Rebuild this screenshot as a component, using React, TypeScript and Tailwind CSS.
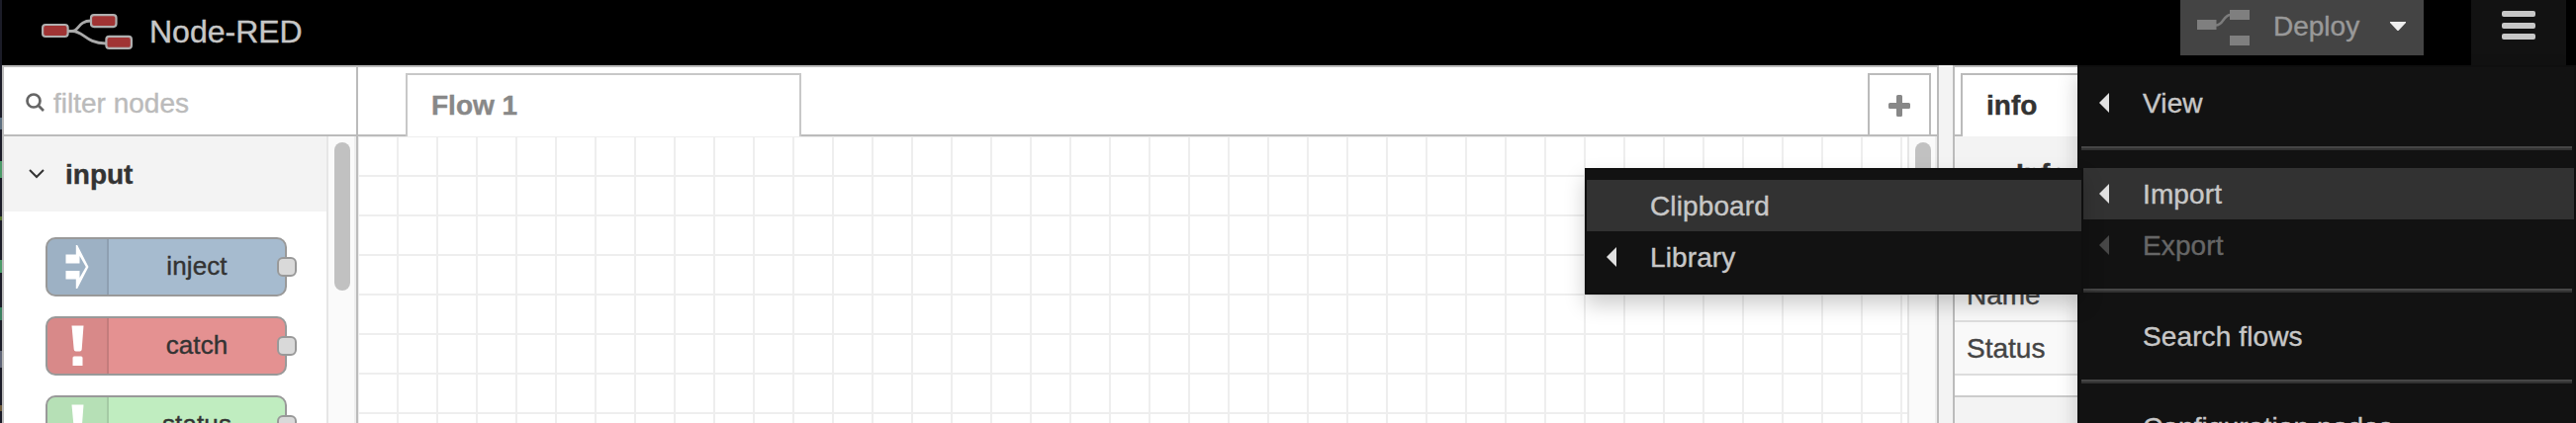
import React from "react";

const strip = [
  { top: 119, h: 12, c: "#5d6f80" },
  { top: 163, h: 17, c: "#4a9a68" },
  { top: 219, h: 4, c: "#55702f" },
  { top: 263, h: 13, c: "#4a9a68" },
  { top: 311, h: 13, c: "#3b8060" },
  { top: 355, h: 17, c: "#5f6577" },
  { top: 410, h: 6, c: "#6d5a3c" },
];

function Logo() {
  return (
    <svg className="block" width="92" height="36" viewBox="0 0 92 36" fill="none">
      <g stroke="#aaaaaa" strokeWidth="2.8">
        <path d="M26 17.5h5c7 0 6-10.500 19-10.500" />
        <path d="M31 17.500c12 0 13 12 34 12.500" />
      </g>
      <g fill="#a03434" stroke="#b0b0b0" strokeWidth="2.200">
        <rect x="1.100" y="11" width="25.500" height="12" rx="3" />
        <rect x="50" y="1.100" width="25.500" height="12" rx="3" />
        <rect x="65.400" y="22.900" width="25.500" height="12" rx="3" />
      </g>
    </svg>
  );
}

function DeployIcon() {
  return (
    <svg className="block" width="53" height="36" viewBox="0 0 53 36">
      <path d="M19 15.500c8 0 7-10.500 15-10.500" stroke="#7c7c7c" strokeWidth="2.500" fill="none" />
      <path d="M0 10h19.500v10H0zM33 0h20v10H33zM33 26h20v10H33z" fill="#7f7f7f" />
    </svg>
  );
}

function InjectIcon() {
  return (
    <svg className="block" width="24" height="46" viewBox="0 0 24 46">
      <path
        fillRule="evenodd"
        d="M.5 10.500h10.300V1h1.400L23.500 23 12.200 45h-1.400v-9.500H.500V27h14v7L20.800 23 14.500 12v7.500H.500z"
        fill="#fff"
      />
    </svg>
  );
}

function AlertIcon() {
  return (
    <svg className="block" width="24" height="46" viewBox="0 0 24 46">
      <path d="M6.500 2.500h12l-1.800 24q-.2 2-2 2h-4q-1.800 0-2-2zM9 33.500h7q1.500 0 1.500 1.500v8h-10v-8q0-1.500 1.500-1.500z" fill="#fff" />
    </svg>
  );
}

function PaletteNode({ label, color, icon }: { label: string; color: string; icon: React.ReactNode }) {
  return (
    <div className={`relative flex h-[60px] w-[244px] shrink-0 rounded-[10px] border-2 border-[#999] ${color}`}>
      <div className="flex w-[62px] shrink-0 items-center justify-center rounded-l-lg border-r-2 border-black/10 bg-black/5">
        {icon}
      </div>
      <div className="flex-1 text-center text-[26px] leading-[54px] tracking-[0.1px]">{label}</div>
      <div className="absolute -right-3 top-[18px] size-5 rounded-[6px] border-2 border-[#999] bg-[#d9d9d9]" />
    </div>
  );
}

function MenuItem({ label, arrow, active, disabled }: { label: string; arrow?: boolean; active?: boolean; disabled?: boolean }) {
  return (
    <div
      className={`flex h-[52px] shrink-0 items-center pl-5 ${active ? "bg-[#323232]" : ""} ${disabled ? "text-[#666]" : "text-[#c7c7c7]"}`}
    >
      <svg className="mr-[34px] block" width="10" height="20" viewBox="0 0 10 20">
        {arrow && <path d="M10 0v20L0 10z" fill={disabled ? "#474747" : "#e0e0e0"} />}
      </svg>
      <span className="pt-0.5 leading-[50px] tracking-[0.12px]">{label}</span>
    </div>
  );
}

const Divider = () => <div className="mx-0.5 my-[18px] h-1 shrink-0 border-b-2 border-[#323232] bg-[#464646]" />;

function Scrollbar({ thumb }: { thumb: string }) {
  return (
    <div className="flex w-[30px] shrink-0 justify-center border-x-2 border-l-[#e6e6e6] border-r-[#eeeeee] bg-[#fafafa] pt-1.5">
      <div className={`w-4 rounded-full bg-[#c1c1c1] ${thumb}`} />
    </div>
  );
}

export default function App() {
  return (
    <div className="relative flex h-[428px] w-[2604px] overflow-hidden bg-white font-['Liberation_Sans',sans-serif] text-[28px] text-[#333] [-webkit-text-stroke:0.4px_currentColor]">
      <div className="relative w-0.5 shrink-0 bg-[#1b1c28]">
        {strip.map((s) => (
          <i key={s.top} className="absolute left-0 w-0.5" style={{ top: s.top, height: s.h, background: s.c }} />
        ))}
      </div>

      <div className="flex min-w-0 flex-1 flex-col">
        <header className="flex h-[66px] shrink-0 items-start bg-black">
          <div className="pl-10 pt-3.5">
            <Logo />
          </div>
          <div className="ml-[17px] text-[32px] leading-[65px] text-[#c7c7c7]">Node-RED</div>
          <div className="ml-auto flex h-14 w-[246px] items-center bg-[#444] pl-[17px]">
            <DeployIcon />
            <span className="-mt-0.5 ml-6 leading-[52px] text-[#999]">Deploy</span>
            <svg className="ml-[31px] -mt-1 block" width="16" height="9" viewBox="0 0 16 9">
              <path d="M0 0h16v1L8.500 9h-1L0 1z" fill="#eee" />
            </svg>
          </div>
          <div className="ml-12 mr-2.5 flex h-[66px] w-24 flex-col items-center gap-[5.500px] bg-[#121212] pt-[11px]">
            <div className="h-1.5 w-[34px] rounded-[2px] bg-[#c7c7c7]" />
            <div className="h-1.5 w-[34px] rounded-[2px] bg-[#c7c7c7]" />
            <div className="h-1.5 w-[34px] rounded-[2px] bg-[#c7c7c7]" />
          </div>
        </header>

        <main className="flex h-[362px] bg-[#f3f3f3]">
          <aside className="flex w-[360px] shrink-0 flex-col border-x-2 border-t-2 border-[#bbb] bg-white">
            <div className="flex h-[70px] shrink-0 items-center border-b-2 border-[#bbb] pl-[22px] pt-[3px] text-[#bbb]">
              <svg className="mr-2 block" width="20" height="20" viewBox="0 0 20 20" fill="none" stroke="#666" strokeWidth="2.700">
                <circle cx="8" cy="8" r="6.500" />
                <path d="M12.800 12.800l5.200 5.200" />
              </svg>
              <span className="pt-0.5 leading-[60px]">filter nodes</span>
            </div>
            <div className="flex min-h-0 flex-1">
              <div className="flex min-w-0 flex-1 flex-col">
                <div className="flex h-[76px] shrink-0 items-center bg-[#f3f3f3] pl-[25px]">
                  <svg className="mr-[21px] block" width="16" height="10" viewBox="0 0 16 10" fill="none" stroke="#333" strokeWidth="2">
                    <path d="M1 1l7 7 7-7" />
                  </svg>
                  <b className="pt-0.5">input</b>
                </div>
                <div className="flex flex-col gap-5 overflow-hidden pl-[42px] pt-[26px]">
                  <PaletteNode label="inject" color="bg-[#a6bbcf]" icon={<InjectIcon />} />
                  <PaletteNode label="catch" color="bg-[#e49191]" icon={<AlertIcon />} />
                  <PaletteNode label="status" color="bg-[#c0edc0]" icon={<AlertIcon />} />
                </div>
              </div>
              <Scrollbar thumb="h-[150px] ml-0.5" />
            </div>
          </aside>

          <section className="flex w-[1598px] shrink-0 flex-col border-r-2 border-t-2 border-[#bbb] bg-white">
            <div className="flex h-[70px] shrink-0 items-stretch">
              <div className="w-12 border-b-2 border-[#bbb]" />
              <div className="mt-1.5 w-[400px] border-x-2 border-t-2 border-[#c8c8c8] pl-[24px] font-bold leading-[61px] text-[#888]">
                Flow 1
              </div>
              <div className="flex-1 border-b-2 border-[#bbb]" />
              <div className="mt-1.5 flex w-16 justify-center border-2 border-[#bbb] pt-5">
                <svg className="block" width="22" height="22" viewBox="0 0 22 22">
                  <path d="M8 1.500Q8 0 9.500 0h3Q14 0 14 1.500V8h6.500Q22 8 22 9.500v3Q22 14 20.500 14H14v6.500Q14 22 12.500 22h-3Q8 22 8 20.500V14H1.500Q0 14 0 12.500v-3Q0 8 1.500 8H8z" fill="#888" />
                </svg>
              </div>
              <div className="w-1.5 border-b-2 border-[#bbb]" />
            </div>
            <div className="flex min-h-0 flex-1">
              <div className="flex-1 bg-[linear-gradient(to_right,#eee_2px,transparent_2px),linear-gradient(to_bottom,#eee_2px,transparent_2px)] bg-[length:40px_40px] bg-[position:-1px_-1px]" />
              <Scrollbar thumb="h-[150px] ml-0.5" />
            </div>
          </section>

          <aside className="ml-3.5 flex min-w-0 flex-1 flex-col border-l-2 border-t-2 border-[#bbb] bg-white">
            <div className="flex h-[70px] shrink-0">
              <div className="w-1.5 border-b-2 border-[#bbb]" />
              <div className="mt-1.5 flex-1 border-l-2 border-t-2 border-[#bbb] pl-6 font-bold leading-[61px]">info</div>
            </div>
            <div className="h-[134px] w-full shrink-0 bg-[#f3f3f3] pl-[62px] font-bold leading-[76px]">Info</div>
            <div className="h-[54px] shrink-0 overflow-hidden border-b-2 border-[#ddd] bg-[#f9f9f9] pl-3 leading-[53px] text-[#444]">Name</div>
            <div className="h-[54px] shrink-0 overflow-hidden border-b-2 border-[#ddd] bg-[#f9f9f9] pl-3 leading-[53px] text-[#444]">Status</div>
            <div className="h-[22px] shrink-0 border-b-2 border-[#ccc]" />
            <div className="flex-1 bg-[#f3f3f3]" />
          </aside>
        </main>
      </div>

      <nav className="absolute left-[2100px] top-[66px] flex h-[420px] w-[504px] flex-col border-2 border-[#0f0f0f] bg-[#121212] pt-2.5 shadow-[0_10px_20px_rgba(0,0,0,0.2)]">
        <MenuItem label="View" arrow />
        <Divider />
        <MenuItem label="Import" arrow active />
        <MenuItem label="Export" arrow disabled />
        <Divider />
        <MenuItem label="Search flows" />
        <Divider />
        <MenuItem label="Configuration nodes" />
      </nav>

      <nav className="absolute left-[1602px] top-[170px] flex h-32 w-[504px] flex-col border-2 border-[#0f0f0f] bg-[#121212] pt-2.5 shadow-[0_10px_20px_rgba(0,0,0,0.2)]">
        <MenuItem label="Clipboard" active />
        <MenuItem label="Library" arrow />
      </nav>
    </div>
  );
}
